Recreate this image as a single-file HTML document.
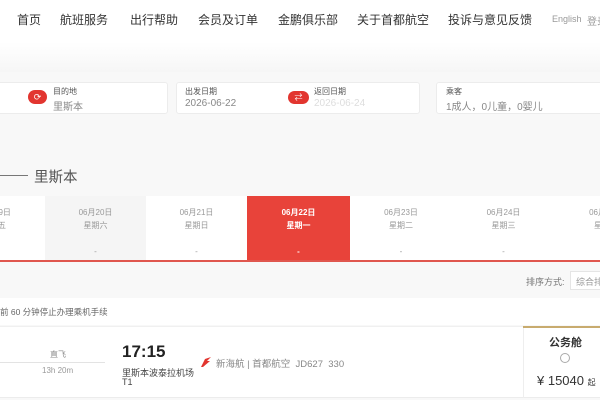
<!DOCTYPE html>
<html><head><meta charset="utf-8"><style>
*{margin:0;padding:0;box-sizing:border-box}
body{width:600px;height:400px;overflow:hidden;position:relative;background:#f8f8f8;font-family:"Liberation Sans","Noto Sans CJK SC",sans-serif;color:#333}
.a{position:absolute;white-space:nowrap}
.nav{font-size:12px;color:#333;top:11px}
.box{position:absolute;top:82px;height:32px;background:#fff;border:1px solid #ececec;border-radius:3px}
.lb{font-size:8px;color:#555}
.vl{font-size:10px;color:#888}
.cell{position:absolute;top:196px;height:64px;width:102px;text-align:center;font-size:8px;color:#999;line-height:13px;padding-top:10px;background:#fff}
</style></head><body>
<div class="a" style="left:0;top:0;width:600px;height:42px;background:#fff"></div>
<div class="a" style="left:0;top:42px;width:600px;height:30px;background:linear-gradient(#fff,#f6f6f6)"></div>
<div class="a nav" style="left:17px">首页</div>
<div class="a nav" style="left:60px">航班服务</div>
<div class="a nav" style="left:130px">出行帮助</div>
<div class="a nav" style="left:198px">会员及订单</div>
<div class="a nav" style="left:278px">金鹏俱乐部</div>
<div class="a nav" style="left:357px">关于首都航空</div>
<div class="a nav" style="left:448px">投诉与意见反馈</div>
<div class="a" style="left:552px;top:14px;font-size:9px;color:#999">English</div>
<div class="a" style="left:587px;top:13px;font-size:10px;color:#999">登录</div>

<div class="box" style="left:-5px;width:173px"></div>
<div class="a" style="left:28px;top:90px;width:19px;height:14px;border-radius:7px;background:#e2352f;color:#fff;font-size:9px;text-align:center;line-height:14px">⟳</div>
<div class="a lb" style="left:53px;top:86px">目的地</div>
<div class="a vl" style="left:53px;top:98px">里斯本</div>
<div class="box" style="left:176px;width:244px"></div>
<div class="a lb" style="left:185px;top:86px">出发日期</div>
<div class="a vl" style="left:185px;top:98px">2026-06-22</div>
<div class="a" style="left:288px;top:91px;width:21px;height:13px;border-radius:7px;background:#e2352f;color:#fff;font-size:8px;text-align:center;line-height:13px">⇄</div>
<div class="a lb" style="left:314px;top:86px">返回日期</div>
<div class="a vl" style="left:314px;top:98px;color:#ddd">2026-06-24</div>
<div class="box" style="left:436px;width:175px"></div>
<div class="a lb" style="left:446px;top:86px">乘客</div>
<div class="a vl" style="left:446px;top:98px">1成人，0儿童，0婴儿</div>

<div class="a" style="left:0;top:175px;width:28px;height:1px;background:#777"></div>
<div class="a" style="left:34px;top:166px;font-size:14.5px;color:#555">里斯本</div>

<div class="cell" style="left:-57px">06月19日<br>星期五<br><br>-</div>
<div class="cell" style="left:45px;width:101px;background:#f5f5f5">06月20日<br>星期六<br><br>-</div>
<div class="cell" style="left:146px;width:101px">06月21日<br>星期日<br><br>-</div>
<div class="cell" style="left:247px;width:103px;background:#e8433a;color:#fff;font-weight:bold">06月22日<br>星期一<br><br>-</div>
<div class="cell" style="left:350px">06月23日<br>星期二<br><br>-</div>
<div class="cell" style="left:452px;width:103px">06月24日<br>星期三<br><br>-</div>
<div class="cell" style="left:555px">06月25日<br>星期四<br><br>-</div>
<div class="a" style="left:0;top:260px;width:600px;height:2px;background:#e0574f"></div>

<div class="a" style="left:526px;top:275px;font-size:9px;color:#777">排序方式:</div>
<div class="a" style="left:570px;top:271px;width:40px;height:19px;background:#fff;border:1px solid #e5e5e5;font-size:9px;color:#999;padding:3px 0 0 5px">综合排序</div>

<div class="a" style="left:0;top:298px;width:600px;height:27px;background:#fff"></div>
<div class="a" style="left:0;top:306px;font-size:8.5px;color:#666">前 60 分钟停止办理乘机手续</div>
<div class="a" style="left:0;top:326px;width:600px;height:72px;background:#fff;border-top:1px solid #f0f0f0;border-bottom:1px solid #ececec"></div>
<div class="a" style="left:50px;top:349px;font-size:8px;color:#888">直飞</div>
<div class="a" style="left:0;top:362px;width:105px;height:1px;background:#e3e3e3"></div>
<div class="a" style="left:42px;top:366px;font-size:8px;color:#999">13h 20m</div>
<div class="a" style="left:122px;top:342px;font-size:17px;font-weight:bold;color:#222">17:15</div>
<div class="a" style="left:122px;top:366px;font-size:9px;color:#444">里斯本波泰拉机场</div>
<div class="a" style="left:122px;top:377px;font-size:9px;color:#444">T1</div>
<svg class="a" style="left:199px;top:356px" width="13" height="12"><path d="M2 11 L6 3 L12 1 L8 5 L11 5 L4 11Z" fill="#e2352f"/></svg>
<div class="a" style="left:216px;top:356px;font-size:9.5px;color:#888">新海航 | 首都航空&nbsp; JD627&nbsp; 330</div>
<div class="a" style="left:523px;top:327px;width:80px;height:71px;border-left:1px solid #eee"></div>
<div class="a" style="left:523px;top:326px;width:80px;height:2px;background:#c8ab6e"></div>
<div class="a" style="left:549px;top:334px;font-size:11px;font-weight:bold;color:#333">公务舱</div>
<div class="a" style="left:560px;top:353px;width:10px;height:10px;border:1px solid #aaa;border-radius:50%"></div>
<div class="a" style="left:537px;top:373px;font-size:13px;color:#333">¥ 15040 <span style="font-size:8px">起</span></div>
</body></html>
